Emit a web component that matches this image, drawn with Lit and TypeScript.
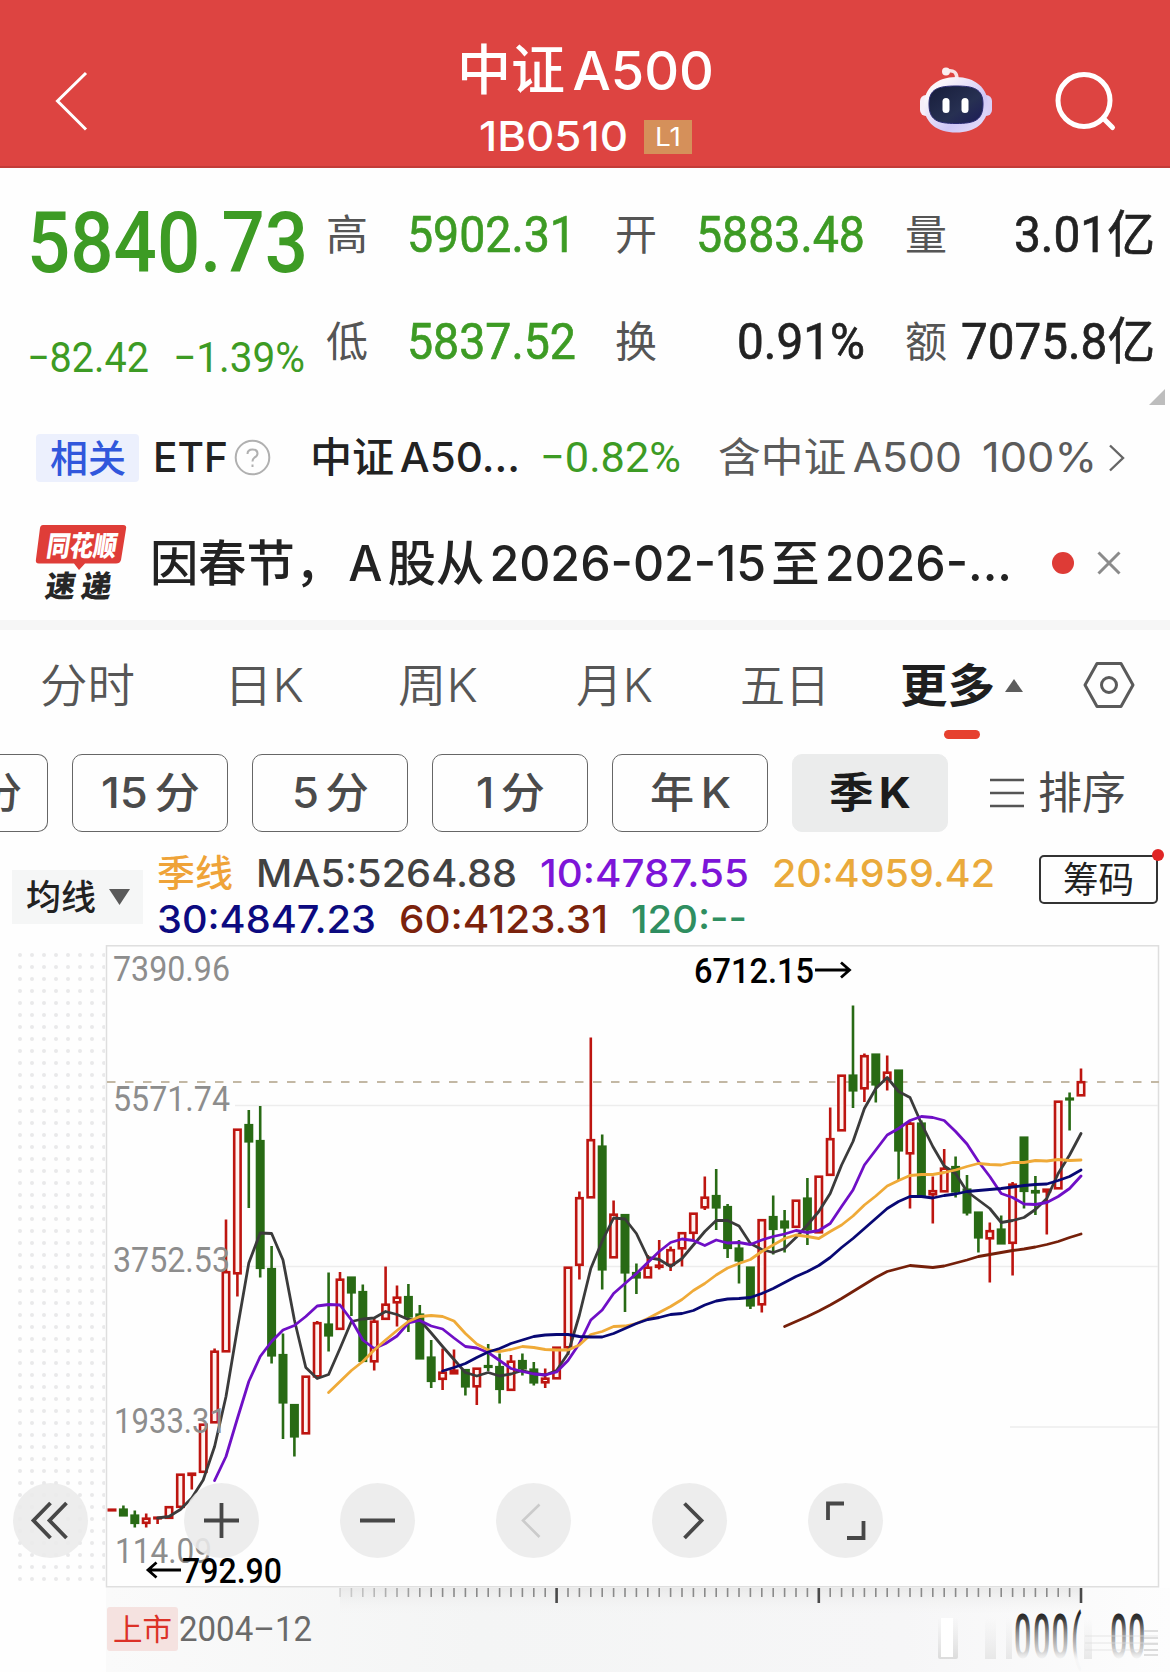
import { LitElement, html, svg, css } from "lit";
import { customElement, property, query } from "lit/decorators.js";
import { classMap } from "lit/directives/class-map.js";

/** One line of text condensed or expanded horizontally to a given width. */
@customElement("fit-text")
class FitText extends LitElement {
  @property({ type: Number }) width = 0;
  @query("span") private inner!: HTMLSpanElement;

  static styles = css`
    :host {
      display: block;
      flex: none;
      white-space: nowrap;
      line-height: 1;
    }
    span {
      display: inline-block;
      transform-origin: 0 50%;
      vertical-align: top;
    }
  `;

  updated() {
    this.inner.style.transform = "none";
    const natural = this.inner.getBoundingClientRect().width;
    this.style.width = `${this.width}px`;
    if (natural > 0) this.inner.style.transform = `scaleX(${this.width / natural})`;
  }

  render() {
    return html`<span><slot></slot></span>`;
  }
}

const fit = (text: string, width: number, cls = "") =>
  html`<fit-text class=${cls} .width=${width}>${text}</fit-text>`;

// Horizontal placement of the quarterly bars.
const FIRST_X = 112;
const STEP = 11.4;
const barX = (i: number) => FIRST_X + STEP * i;

// [up, high, body top, body bottom, low]
type Bar = [number, number, number, number, number];
const BARS: Bar[] = [
  [1, 1508.5, 1508.5, 1511.5, 1511.5], [0, 1505.5, 1508.5, 1516.5, 1516.5], [0, 1510.5, 1514.5, 1524, 1527.5],
  [1, 1513.5, 1517.5, 1524, 1527.5], [1, 1516.5, 1516.5, 1519.5, 1524], [1, 1506, 1506, 1519, 1519],
  [1, 1473.5, 1473.5, 1508, 1508], [1, 1472.5, 1472.5, 1476, 1489.5], [1, 1423.5, 1423.5, 1473, 1473],
  [1, 1348.5, 1350.5, 1423.5, 1423.5], [1, 1219.5, 1271, 1352.5, 1352.5], [1, 1128.5, 1128.5, 1274.5, 1296.5],
  [0, 1110, 1124, 1142.5, 1208], [0, 1106, 1140, 1269, 1277.5], [0, 1246, 1268, 1356.5, 1363.5],
  [0, 1333.5, 1354, 1403.5, 1439], [0, 1404, 1404, 1437.5, 1456.5], [1, 1375.5, 1375.5, 1434.5, 1434.5],
  [1, 1321, 1322, 1377.5, 1377.5], [0, 1272.5, 1323.5, 1336.5, 1351.5], [1, 1272, 1278.5, 1330, 1330],
  [0, 1276.5, 1276.5, 1293.5, 1316], [0, 1284.5, 1291, 1362, 1362], [1, 1318.5, 1320.5, 1362.5, 1370.5],
  [1, 1266.5, 1303.5, 1320, 1320], [1, 1285.5, 1296.5, 1303.5, 1326.5], [0, 1284, 1296, 1317.5, 1332],
  [0, 1305, 1313.5, 1359.5, 1359.5], [0, 1340, 1356.5, 1382, 1388], [1, 1348.5, 1371.5, 1380, 1390],
  [1, 1349.5, 1369.5, 1374.5, 1374.5], [0, 1369, 1369, 1387.5, 1395.5], [1, 1367.5, 1367.5, 1387.5, 1405],
  [0, 1344, 1365, 1368, 1371], [0, 1353.5, 1366, 1390, 1403.5], [1, 1355, 1360.5, 1391, 1391],
  [0, 1353.5, 1360, 1369.5, 1375.5], [0, 1362, 1368.5, 1383.5, 1385.5], [1, 1368.5, 1377.5, 1383.5, 1388],
  [1, 1346.5, 1346.5, 1379.5, 1379.5], [1, 1266.5, 1266.5, 1348.5, 1355], [1, 1191.5, 1197, 1266, 1279.5],
  [1, 1037.5, 1139, 1198.5, 1198.5], [0, 1134.5, 1145.5, 1270.5, 1289.5], [1, 1200.5, 1213.5, 1258.5, 1258.5],
  [0, 1214, 1214, 1273.5, 1312], [0, 1263.5, 1272, 1278.5, 1294], [1, 1255, 1266.5, 1278.5, 1278.5],
  [1, 1240, 1264.5, 1268, 1269.5], [1, 1246.5, 1249, 1266, 1271], [1, 1232, 1232, 1249.5, 1266.5],
  [1, 1212.5, 1212.5, 1234, 1240], [1, 1176.5, 1196.5, 1208.5, 1210], [0, 1169, 1195, 1208.5, 1230],
  [0, 1204, 1206, 1249, 1258], [0, 1240, 1247.5, 1261.5, 1283.5], [0, 1266.5, 1266.5, 1306.5, 1309],
  [1, 1219, 1219, 1305.5, 1312.5], [0, 1195.5, 1216, 1230, 1254.5], [0, 1210, 1220.5, 1228.5, 1252.5],
  [1, 1199.5, 1199.5, 1228, 1228], [0, 1178, 1197.5, 1230.5, 1245], [1, 1175.5, 1175.5, 1233.5, 1233.5],
  [1, 1107.5, 1138, 1176, 1176], [1, 1074.5, 1074.5, 1131.5, 1131.5], [0, 1005.5, 1074.5, 1091.5, 1108],
  [1, 1053.5, 1055, 1089.5, 1102], [0, 1053.5, 1053.5, 1085.5, 1102.5], [1, 1055.5, 1071.5, 1080, 1090.5],
  [0, 1069.5, 1069.5, 1151.5, 1180], [1, 1121.5, 1122.5, 1154.5, 1208.5], [0, 1120.5, 1122.5, 1196.5, 1196.5],
  [1, 1176.5, 1190, 1195.5, 1223.5], [1, 1149, 1167.5, 1192.5, 1192.5], [0, 1156.5, 1166, 1192.5, 1197.5],
  [0, 1175, 1188.5, 1213.5, 1215.5], [0, 1211.5, 1211.5, 1238.5, 1252.5], [1, 1222.5, 1230, 1239.5, 1282.5],
  [0, 1215.5, 1228.5, 1244.5, 1244.5], [1, 1182, 1183.5, 1244, 1275.5], [0, 1136.5, 1136.5, 1192, 1208.5],
  [0, 1176, 1190, 1193.5, 1215], [1, 1188.5, 1188.5, 1192.5, 1234.5], [1, 1100.5, 1100.5, 1189.5, 1189.5],
  [0, 1092.5, 1097.5, 1100, 1130.5], [1, 1068.5, 1081, 1096.5, 1096.5],
];

interface Average { name: string; start: number; ys: number[] }
const AVERAGES: Average[] = [
  { name: "ma5", start: 4, ys: [1518, 1516.5, 1509.5, 1498, 1480, 1446.5, 1396.5, 1328.5, 1263, 1233, 1233.5, 1260, 1320, 1367.5, 1378.5, 1374.5, 1348.5, 1321.5, 1319, 1318, 1311.5, 1314.5, 1319.5, 1320, 1333, 1346.5, 1359.5, 1372.5, 1376, 1372.5, 1376, 1374, 1370.5, 1373.5, 1375, 1370.5, 1353.5, 1315, 1268.5, 1241, 1218, 1219, 1233.5, 1257.5, 1259.5, 1266.5, 1258.5, 1245, 1231.5, 1220.5, 1220.5, 1226, 1243.5, 1249.5, 1252.5, 1248.5, 1237.5, 1225, 1211.5, 1193.5, 1165, 1141.5, 1108.5, 1088.5, 1077.5, 1091.5, 1097.5, 1123.5, 1146.5, 1166, 1173.5, 1191.5, 1200, 1208.5, 1222.5, 1220.5, 1217.5, 1209.5, 1198.5, 1173.5, 1155, 1133.5] },
  { name: "ma10", start: 9, ys: [1480.5, 1456.5, 1418.5, 1381.5, 1356.5, 1341.5, 1330, 1325.5, 1316.5, 1306, 1304.5, 1305, 1320, 1340, 1348.5, 1343.5, 1336, 1323, 1320.5, 1326, 1329, 1338, 1346.5, 1348, 1352.5, 1360.5, 1368.5, 1371.5, 1374, 1375, 1372, 1360.5, 1343.5, 1320, 1310, 1293.5, 1283.5, 1273.5, 1262.5, 1251.5, 1242.5, 1239, 1240.5, 1245.5, 1240, 1243, 1242.5, 1244.5, 1240, 1236.5, 1234, 1230.5, 1232.5, 1230.5, 1223.5, 1206.5, 1190, 1165, 1150, 1135, 1128.5, 1120.5, 1116.5, 1117.5, 1120.5, 1131.5, 1144, 1161.5, 1176.5, 1193.5, 1197.5, 1204, 1204.5, 1202.5, 1196.5, 1188.5, 1176] },
  { name: "ma20", start: 19, ys: [1392.5, 1381.5, 1370.5, 1361.5, 1350, 1340, 1330.5, 1321.5, 1316.5, 1315.5, 1316.5, 1321, 1333.5, 1344, 1350, 1351.5, 1349.5, 1346.5, 1347.5, 1349.5, 1350, 1350, 1345, 1334.5, 1331.5, 1326.5, 1326, 1323.5, 1318.5, 1312.5, 1306.5, 1299.5, 1290.5, 1283.5, 1275, 1268, 1263.5, 1259.5, 1251.5, 1245, 1238.5, 1235, 1236.5, 1238.5, 1231.5, 1225, 1216, 1205, 1196, 1186, 1180.5, 1175.5, 1174.5, 1174.5, 1172.5, 1170, 1166.5, 1163.5, 1164.5, 1165, 1162.5, 1162.5, 1160.5, 1161, 1159.5, 1160.5, 1160] },
  { name: "ma30", start: 29, ys: [1371, 1367.5, 1363.5, 1357.5, 1352, 1348.5, 1343.5, 1340, 1336.5, 1335, 1334.5, 1334.5, 1336.5, 1337, 1337, 1333.5, 1328.5, 1323.5, 1319.5, 1317.5, 1314.5, 1313.5, 1310.5, 1305, 1301, 1299, 1298.5, 1297.5, 1293.5, 1288.5, 1282.5, 1276.5, 1271.5, 1265.5, 1257.5, 1247.5, 1238.5, 1228.5, 1218.5, 1208.5, 1201.5, 1196.5, 1196.5, 1198, 1195.5, 1194, 1191.5, 1190.5, 1189.5, 1188.5, 1187, 1185.5, 1184.5, 1184, 1180.5, 1176.5, 1170] },
  { name: "ma60", start: 59, ys: [1326.5, 1321.5, 1316.5, 1311, 1305, 1298.5, 1291.5, 1284.5, 1277.5, 1271.5, 1268.5, 1265.5, 1266.5, 1267.5, 1266, 1263, 1260, 1256.5, 1254.5, 1252.5, 1250.5, 1249, 1247, 1244.5, 1241.5, 1237.5, 1234] },
];

const AXIS: [string, number, number, number][] = [
  ["7390.96", 113, 980.5, 117],
  ["5571.74", 113, 1111, 117],
  ["3752.53", 113, 1272, 117],
  ["1933.31", 114, 1432.5, 113],
  ["114.09", 115, 1563, 97],
];

const SUB_TABS: [string, number][] = [["15 分", 99], ["5 分", 77], ["1 分", 69], ["年 K", 81], ["季 K", 82]];

@customElement("kline-chart")
class KlineChart extends LitElement {
  static styles = css`
    :host { display: block; position: relative; height: 727px; }
    .plot { display: block; width: 1170px; height: 727px; }
    .frame { fill: none; stroke: #dedede; stroke-width: 1.5; }
    .grid { stroke: #ededed; stroke-width: 1.3; }
    .last { stroke: #c3b8a4; stroke-width: 1.8; stroke-dasharray: 8.5 9.5; }
    .up { stroke: #bd1510; fill: #fff3f0; stroke-width: 2.6; }
    .down { stroke: #286a14; fill: #286a14; stroke-width: 2.6; }
    .average { fill: none; stroke-width: 2.8; stroke-linejoin: round; stroke-linecap: round; }
    .ma5 { stroke: #3b3b3b; }
    .ma10 { stroke: #6f0fc6; }
    .ma20 { stroke: #efaa38; }
    .ma30 { stroke: #080874; }
    .ma60 { stroke: #75200a; }
    .axis { font: 400 35.5px Roboto, sans-serif; fill: #8d8d8d; }
    .mark { font: 500 34.5px Roboto, Inter, sans-serif; fill: #000; }
    .arrow { fill: none; stroke: #000; stroke-width: 2.8; }
    .tick { stroke: #8a8a8a; stroke-width: 1.6; }
    .tick-major { stroke: #4a4a4a; stroke-width: 2.6; }
    .ipo { font: 400 30px "Noto Sans CJK SC", sans-serif; fill: #dc3127; }
    .date { font: 400 35px Roboto, sans-serif; fill: #6a6a6a; }
    .fading { font: 500 61px Roboto, sans-serif; fill: url(#fade-down); }
    .button {
      position: absolute; top: 538px; width: 75px; height: 75px;
      border-radius: 50%; background: rgba(234, 234, 234, 0.88);
    }
    .button svg { display: block; width: 75px; height: 75px; fill: none; stroke: #474747; stroke-width: 3.8; }
    .button.disabled svg { stroke: #cbcbcb; stroke-width: 2.6; }
    .fold { left: 13px; }
    .plus { left: 184px; }
    .minus { left: 340px; }
    .prev { left: 496px; }
    .next { left: 652px; }
    .full { left: 808px; }
  `;

  private bar([up, high, top, bottom, low]: Bar, i: number) {
    const x = barX(i);
    const inset = 1.2;
    return svg`<g class=${up ? "up" : "down"}>
      ${high < top ? svg`<line x1=${x} x2=${x} y1=${high} y2=${top + inset}></line>` : ""}
      ${low > bottom ? svg`<line x1=${x} x2=${x} y1=${bottom - inset} y2=${low}></line>` : ""}
      <rect x=${x - 3.2} y=${top + inset} width="6.4" height=${Math.max(bottom - top - 2 * inset, 0.6)}></rect>
    </g>`;
  }

  private tick(i: number) {
    const x = barX(i);
    const major = i === 39 || i === 62 || i === 85;
    return svg`<line class=${major ? "tick-major" : "tick"} opacity=${Math.min(1, 0.3 + (i - 20) * 0.08)}
      x1=${x} x2=${x} y1="1588" y2=${major ? 1603 : 1597}></line>`;
  }

  render() {
    return html`
      <svg class="plot" viewBox="0 945 1170 727">
        <defs>
          <pattern id="dots" x="17" y="952" width="12" height="12" patternUnits="userSpaceOnUse">
            <circle cx="3" cy="3" r="2" fill="#e9e9ea"></circle>
          </pattern>
          <linearGradient id="footer" x1="0" x2="1" y1="0" y2="0">
            <stop offset="0" stop-color="#fafafa"></stop>
            <stop offset="0.35" stop-color="#f4f5f5"></stop>
            <stop offset="0.75" stop-color="#f6f6f7"></stop>
            <stop offset="1" stop-color="#fdfdfd"></stop>
          </linearGradient>
          <linearGradient id="ruler" x1="0" x2="0" y1="0" y2="1">
            <stop offset="0" stop-color="#eaeaea"></stop>
            <stop offset="1" stop-color="#f2f2f2" stop-opacity="0"></stop>
          </linearGradient>
          <linearGradient id="fade-down" gradientUnits="userSpaceOnUse" x1="0" x2="0" y1="-44" y2="2">
            <stop offset="0" stop-color="#262626"></stop>
            <stop offset="0.12" stop-color="#3a3a3a"></stop>
            <stop offset="0.4" stop-color="#8a8a8a"></stop>
            <stop offset="0.8" stop-color="#bcbcbc" stop-opacity="0.7"></stop>
            <stop offset="1" stop-color="#e0e0e0" stop-opacity="0.15"></stop>
          </linearGradient>
          <linearGradient id="stub" x1="0" x2="0" y1="0" y2="1">
            <stop offset="0" stop-color="#e2e2e2" stop-opacity="0"></stop>
            <stop offset="1" stop-color="#dcdcdc"></stop>
          </linearGradient>
        </defs>
        <rect x="17" y="952" width="88" height="632" fill="url(#dots)"></rect>
        <rect x="106" y="1588" width="1064" height="84" fill="url(#footer)"></rect>
        <rect x="340" y="1588" width="740" height="26" fill="url(#ruler)"></rect>
        <rect class="frame" x="106.5" y="945.8" width="1052" height="641"></rect>
        <line class="grid" x1="235" x2="1158" y1="1105.5" y2="1105.5"></line>
        <line class="grid" x1="235" x2="1158" y1="1266.5" y2="1266.5"></line>
        <line class="grid" x1="1010" x2="1158" y1="1427" y2="1427"></line>
        <line class="last" x1="107" x2="1159" y1="1082" y2="1082"></line>
        ${BARS.map((b, i) => this.bar(b, i))}
        ${AVERAGES.map((a) => svg`<polyline class="average ${a.name}"
          points=${a.ys.map((y, i) => `${barX(a.start + i).toFixed(1)},${y}`).join(" ")}></polyline>`)}
        ${AXIS.map(([text, x, y, w]) => svg`<text class="axis" x=${x} y=${y} textLength=${w}
          lengthAdjust="spacingAndGlyphs">${text}</text>`)}
        <text class="mark" x="694" y="983" textLength="120" lengthAdjust="spacingAndGlyphs">6712.15</text>
        <path class="arrow" d="M815 970H849M841 962.500L849.500 970L841 977.500"></path>
        <path class="arrow" d="M181 1570H148M156.500 1562.500L148 1570L156.500 1577.500"></path>
        <text class="mark" x="182" y="1583" textLength="100" lengthAdjust="spacingAndGlyphs">792.90</text>
        ${BARS.map((_, i) => (i < 20 ? "" : this.tick(i)))}
        <rect x="107" y="1607" width="71" height="44" rx="3" fill="#f5e2e0"></rect>
        <text class="ipo" x="113" y="1640" textLength="59" lengthAdjust="spacingAndGlyphs">上市</text>
        <text class="date" x="179" y="1641" textLength="133" lengthAdjust="spacingAndGlyphs">2004–12</text>
        <rect x="938" y="1618" width="20" height="41" rx="2" fill="url(#stub)"></rect>
        <rect x="941" y="1618" width="12" height="39" fill="#fff"></rect>
        <rect x="985" y="1618" width="11" height="41" fill="url(#stub)" opacity="0.6"></rect>
        <rect x="1006" y="1618" width="6" height="41" fill="url(#stub)" opacity="0.6"></rect>
        <rect x="1084" y="1618" width="8" height="41" fill="url(#stub)" opacity="0.6"></rect>
        <text class="fading" transform="translate(1014 1658) scale(0.5 1)" x="0 38 75 114 192 228">000(00</text>
        <path d="M1085 1636H1158M1085 1643H1158M1085 1650H1158" stroke="#dedede" stroke-width="2" opacity="0.35"></path>
        <path d="M1144 1631H1158M1144 1638H1158M1144 1644H1158M1144 1650H1158M1144 1655H1158" stroke="#d2d2d2" stroke-width="2" opacity="0.7"></path>
      </svg>
      <div class="button fold"><svg viewBox="0 0 75 75"><path d="M37.500 20L20.500 37.500L37.500 55M53.500 20L36.500 37.500L53.500 55"></path></svg></div>
      <div class="button plus"><svg viewBox="0 0 75 75"><path d="M20 37.500H55M37.500 20V55"></path></svg></div>
      <div class="button minus"><svg viewBox="0 0 75 75"><path d="M20 37.500H55"></path></svg></div>
      <div class="button prev disabled"><svg viewBox="0 0 75 75"><path d="M43.500 21.500L27 37.500L43.500 54"></path></svg></div>
      <div class="button next"><svg viewBox="0 0 75 75"><path d="M32.500 20.500L49.500 37.500L32.500 55"></path></svg></div>
      <div class="button full"><svg viewBox="0 0 75 75"><path d="M20 37V20.500H36M55.500 38V55H39"></path></svg></div>
    `;
  }
}

@customElement("app-root")
class AppRoot extends LitElement {
  static styles = css`
    :host {
      display: block;
      width: 1170px;
      height: 1672px;
      overflow: hidden;
      background: #fefefe;
      color: #222;
      font-family: Inter, "Noto Sans CJK SC", sans-serif;
    }
    svg { display: block; flex: none; }

    .header {
      box-sizing: border-box; height: 168px; padding: 0 54px 0 54px;
      display: grid; grid-template-columns: 1fr auto 1fr; align-items: start;
      background: #dd4441; color: #fff; border-bottom: 2px solid #c23c38;
    }
    .back { margin-top: 71px; fill: none; stroke: #fff; stroke-width: 3; }
    .titles { display: flex; flex-direction: column; align-items: center; padding-top: 44px; }
    .title { font-size: 54px; font-weight: 500; word-spacing: -0.13em; }
    .code-row { display: flex; align-items: center; gap: 16px; margin-top: 18px; padding-left: 1px; }
    .code { font-size: 41px; font-weight: 500; }
    .level {
      display: flex; align-items: center; justify-content: center;
      width: 48px; height: 34px; background: #d5905a; font-size: 26px;
    }
    .header-icons { display: flex; justify-content: flex-end; gap: 62px; padding-top: 66px; margin-right: -1px; }
    .search { margin-top: 5px; fill: none; stroke: #fff; stroke-width: 5; stroke-linecap: round; }

    .quote { position: relative; display: flex; box-sizing: border-box; height: 244px; padding: 14px 0 0 27px; }
    .quote-main { width: 298.5px; color: #3d9b24; font-family: Roboto, sans-serif; }
    .price { display: flex; align-items: center; height: 121px; font-size: 86px; font-weight: 500; }
    .change { display: flex; align-items: center; gap: 24px; height: 110px; font-size: 42px; }
    .stats { display: grid; grid-template-columns: repeat(3, 250px); grid-auto-rows: 106.5px; column-gap: 39.5px; }
    .stat { display: flex; align-items: center; justify-content: space-between; }
    .stat-label { font-size: 42px; color: #555; }
    .stat-value { font-family: Roboto, "Noto Sans CJK SC", sans-serif; font-size: 50px; -webkit-text-stroke: 0.7px currentColor; }
    .green { color: #3d9b24; }
    .corner { position: absolute; right: 5px; bottom: 7px; fill: #bdbdbd; }

    .related { display: flex; align-items: center; height: 91px; padding-left: 36px; font-size: 41px; word-spacing: -0.13em; }
    .tag {
      display: flex; align-items: center; justify-content: center; width: 103px; height: 48px;
      border-radius: 4px; background: #ecf0fd; color: #3157dc; font-size: 38px; font-weight: 500;
    }
    .etf { margin-left: 14px; font-weight: 500; }
    .help { margin-left: 6px; }
    .fund { margin-left: 39px; font-weight: 500; }
    .fund-change { margin-left: 20px; font-family: Roboto, sans-serif; font-size: 43px; }
    .holding { margin-left: 37px; color: #5b5b5b; }
    .weight { margin-left: 20px; color: #5b5b5b; }
    .more { margin-left: 11px; fill: none; stroke: #666; stroke-width: 2.4; }

    .news { display: flex; align-items: center; box-sizing: border-box; height: 117px; padding: 3px 0 0 35px; }
    .brand { overflow: visible; font-family: "Noto Sans CJK SC", sans-serif; font-weight: 900; font-size: 30px; }
    .headline { margin-left: 23px; font-size: 49px; font-weight: 500; word-spacing: -0.16em; }
    .unread { width: 22px; height: 22px; margin-left: 40px; border-radius: 50%; background: #de3b36; }
    .close { margin-left: 23px; stroke: #8b8b8b; stroke-width: 3; }
    .separator { height: 10px; background: #f6f6f6; }

    .tabs { display: flex; align-items: center; height: 110px; padding-left: 40px; font-size: 46px; color: #565656; }
    .tab { font-weight: 350; }
    .tab-day { margin-left: 89px; }
    .tab-week { margin-left: 94px; }
    .tab-month { margin-left: 98px; }
    .tab-five { margin-left: 87px; }
    .tab-more { position: relative; display: flex; align-items: center; gap: 10px; margin-left: 70px; color: #1f1f1f; font-weight: 700; }
    .indicator { position: absolute; left: 44px; top: 68px; width: 36px; height: 9px; border-radius: 5px; background: #e6412f; }
    .settings { margin-left: 59px; fill: none; stroke: #5a5a5a; stroke-width: 3; }

    .periods { display: flex; align-items: center; gap: 24px; height: 78px; margin-top: 14px; font-size: 42px; color: #4b4b4b; overflow: hidden; word-spacing: -0.12em; }
    .period {
      display: flex; flex: none; align-items: center; justify-content: center; box-sizing: border-box;
      width: 156px; height: 78px; border: 1.5px solid #666; border-radius: 10px; font-weight: 500;
    }
    .period.cut { width: 48px; border-left: 0; border-radius: 0 10px 10px 0; justify-content: flex-end; padding-right: 25px; }
    .period.selected { border-color: #ebecec; background: #ebecec; color: #1c1c1c; font-weight: 700; }
    .sort { display: flex; align-items: center; gap: 13px; margin-left: 18px; font-size: 44px; }
    .sort svg { stroke: #555; stroke-width: 2.4; }

    .averages { display: flex; box-sizing: border-box; height: 113px; padding: 18px 0 0 12px; font-size: 38px; font-weight: 500; }
    .picker {
      display: flex; align-items: center; justify-content: center; gap: 13px; box-sizing: border-box;
      width: 131px; height: 54px; margin-top: 20px; background: #f5f6f6; color: #222; font-size: 35px;
    }
    .values { width: 882px; padding-left: 14px; }
    .line { display: flex; align-items: center; gap: 23px; height: 46px; }
    .v-name { color: #efa338; font-size: 37px; }
    .v5 { color: #424242; }
    .v10 { color: #7d15d8; }
    .v20 { color: #eaaa3b; }
    .v30 { color: #0c0a80; }
    .v60 { color: #7b220c; }
    .v120 { color: #2f8e60; }
    .chips {
      position: relative; display: flex; align-items: center; justify-content: center; box-sizing: border-box;
      width: 119px; height: 49px; margin-top: 5px; border: 2px solid #333; border-radius: 5px; font-size: 36px; font-weight: 400;
    }
    .chips-dot { position: absolute; right: -8px; top: -8px; width: 12px; height: 12px; border-radius: 50%; background: #e02626; }
  `;

  private stat(label: string, value: string, width: number, green = false) {
    return html`<div class="stat">
      ${fit(label, 42, "stat-label")}
      <fit-text class=${classMap({ "stat-value": true, green })} .width=${width}>${value}</fit-text>
    </div>`;
  }

  render() {
    return html`
      <header class="header">
        <svg class="back" width="36" height="60" viewBox="0 0 36 60"><path d="M32 2L3.500 30L32 58.500"></path></svg>
        <div class="titles">
          ${fit("中证 A500", 257, "title")}
          <div class="code-row">${fit("1B0510", 149, "code")}<div class="level">${fit("L1", 26)}</div></div>
        </div>
        <div class="header-icons">
          <svg width="74" height="68" viewBox="0 0 74 68">
            <defs>
              <linearGradient id="shell" x1="0" y1="0" x2="1" y2="1">
                <stop offset="0.2" stop-color="#fbf6fa"></stop>
                <stop offset="0.65" stop-color="#cfc6f6"></stop>
                <stop offset="1" stop-color="#e9e3fb"></stop>
              </linearGradient>
              <linearGradient id="visor" x1="0" y1="0" x2="1" y2="1">
                <stop offset="0" stop-color="#171d3a"></stop>
                <stop offset="0.6" stop-color="#273052"></stop>
                <stop offset="1" stop-color="#1c1b58"></stop>
              </linearGradient>
            </defs>
            <path d="M28 5Q38 3 38 13" fill="none" stroke="#f8e2e4" stroke-width="3.500"></path>
            <circle cx="27" cy="5.500" r="4" fill="#fbeef0"></circle>
            <rect x="1" y="29" width="12" height="21" rx="6" fill="#f6eef8"></rect>
            <rect x="61" y="29" width="12" height="21" rx="6" fill="#d9cff6"></rect>
            <path d="M37 11C56 11 69 22 69 39C69 57 56 66.500 37 66.500C18 66.500 5 57 5 39C5 22 18 11 37 11Z" fill="url(#shell)"></path>
            <path d="M37 20C55 20 64 23 64 38C64 54 56 57.500 37 57.500C18 57.500 10 54 10 38C10 23 19 20 37 20Z" fill="url(#visor)" stroke="#2a2a72"></path>
            <rect x="23.500" y="32" width="7" height="15" rx="3.500" fill="#fff"></rect>
            <rect x="42.500" y="32" width="7" height="15" rx="3.500" fill="#fff"></rect>
          </svg>
          <svg class="search" width="62" height="62" viewBox="0 0 62 62"><circle cx="29" cy="29.500" r="26"></circle><path d="M48.500 47.500L57.500 56.500"></path></svg>
        </div>
      </header>

      <section class="quote">
        <div class="quote-main">
          <div class="price">${fit("5840.73", 281)}</div>
          <div class="change">${fit("−82.42", 122)}${fit("−1.39%", 132)}</div>
        </div>
        <div class="stats">
          ${this.stat("高", "5902.31", 169, true)}${this.stat("开", "5883.48", 169, true)}${this.stat("量", "3.01亿", 141)}
          ${this.stat("低", "5837.52", 169, true)}${this.stat("换", "0.91%", 128)}${this.stat("额", "7075.8亿", 194)}
        </div>
        <svg class="corner" width="16" height="16" viewBox="0 0 17 17"><path d="M17 0V17H0Z"></path></svg>
      </section>

      <section class="related">
        <div class="tag">${fit("相关", 76)}</div>
        ${fit("ETF", 75, "etf")}
        <svg class="help" width="37" height="37" viewBox="0 0 37 37" fill="none" stroke="#b0b0b0" stroke-width="2">
          <circle cx="18.500" cy="18.500" r="16.800"></circle>
          <path d="M13.500 15Q13.500 10.500 18.500 10.500Q23.500 10.500 23.500 14.500Q23.500 17 20.500 18.500Q18.500 20 18.500 22.500M18.500 25.500V28"></path>
        </svg>
        ${fit("中证 A50...", 210, "fund")}
        ${fit("−0.82%", 141, "fund-change green")}
        ${fit("含中证 A500", 244, "holding")}
        ${fit("100%", 115, "weight")}
        <svg class="more" width="18" height="28" viewBox="0 0 18 28"><path d="M2 1.500L15 14L2 26.500"></path></svg>
      </section>

      <section class="news">
        <svg class="brand" width="92" height="78" viewBox="0 0 92 78">
          <path d="M8 1H88Q92 1 91 5L86 36Q85 39.500 81 39.500H50L44 46L39 39.500H4Q0 39.500 1 35L5 4Q5.500 1 8 1Z" fill="#df3d38"></path>
          <text transform="translate(10.500 31.500) skewX(-9)" fill="#fff" font-size="28" textLength="70" lengthAdjust="spacingAndGlyphs">同花顺</text>
          <text transform="translate(9 73) skewX(-9)" fill="#262626" x="0 36">速递</text>
        </svg>
        ${fit("因春节， A 股从 2026-02-15 至 2026-...", 862, "headline")}
        <div class="unread"></div>
        <svg class="close" width="24" height="24" viewBox="0 0 24 24"><path d="M1.500 1.500L22.500 22.500M22.500 1.500L1.500 22.500"></path></svg>
      </section>
      <div class="separator"></div>

      <nav class="tabs">
        ${fit("分时", 95, "tab")}
        ${fit("日K", 80, "tab tab-day")}
        ${fit("周K", 80, "tab tab-week")}
        ${fit("月K", 77, "tab tab-month")}
        ${fit("五日", 90, "tab tab-five")}
        <div class="tab-more">
          ${fit("更多", 95)}
          <svg width="18" height="13" viewBox="0 0 18 13"><path d="M9 0L18 13H0Z" fill="#5d5d5d"></path></svg>
          <div class="indicator"></div>
        </div>
        <svg class="settings" width="54" height="48" viewBox="0 0 54 48">
          <path d="M15 2.500H39L51 24L39 45.500H15L3 24Z" stroke-linejoin="round"></path><circle cx="27" cy="24" r="7.500"></circle>
        </svg>
      </nav>

      <nav class="periods">
        <div class="period cut">${fit("分", 41)}</div>
        ${SUB_TABS.map(([label, w], i) => html`
          <div class=${classMap({ period: true, selected: i === 4 })}>${fit(label, w)}</div>`)}
        <div class="sort">
          <svg width="35" height="30" viewBox="0 0 35 30"><path d="M0 2H34M0 15H34M0 28H34"></path></svg>
          ${fit("排序", 88)}
        </div>
      </nav>

      <section class="averages">
        <div class="picker">${fit("均线", 70)}<svg width="21" height="16" viewBox="0 0 21 16"><path d="M0 0H21L10.500 16Z" fill="#5a5a5a"></path></svg></div>
        <div class="values">
          <div class="line">${fit("季线", 76, "v-name")}${fit("MA5:5264.88", 261, "v5")}${fit("10:4787.55", 209, "v10")}${fit("20:4959.42", 223, "v20")}</div>
          <div class="line">${fit("30:4847.23", 219, "v30")}${fit("60:4123.31", 209, "v60")}${fit("120:--", 116, "v120")}</div>
        </div>
        <div class="chips">${fit("筹码", 71)}<div class="chips-dot"></div></div>
      </section>

      <kline-chart></kline-chart>
    `;
  }
}
